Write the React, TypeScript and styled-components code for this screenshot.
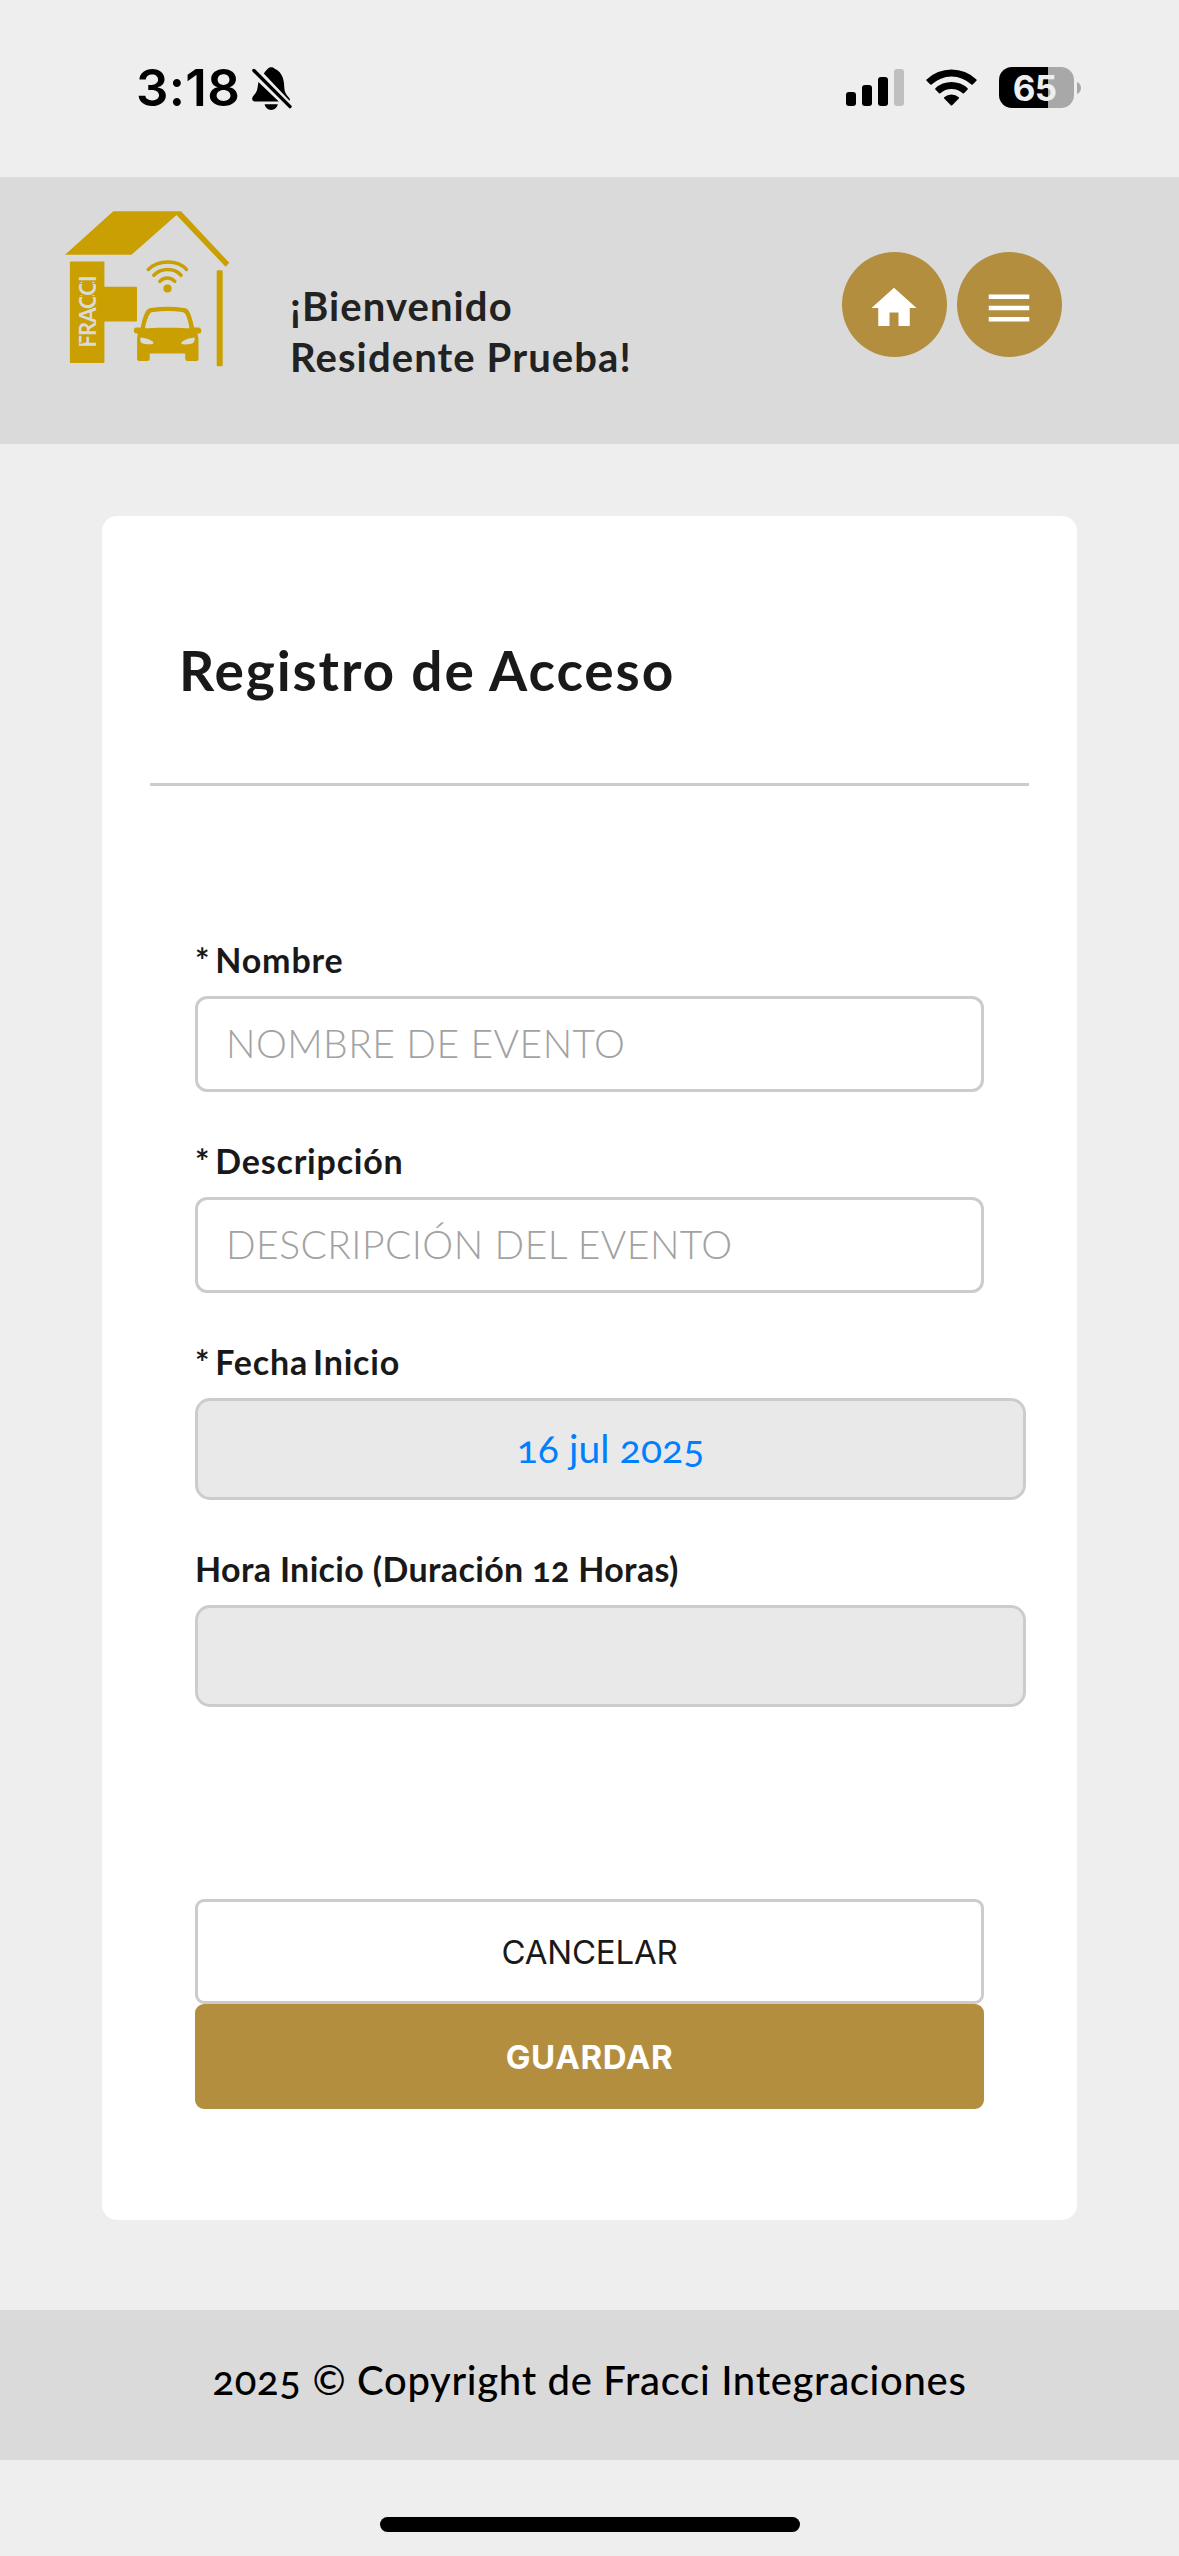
import React from 'react';
import styled, { createGlobalStyle, css } from 'styled-components';

const color = {
  page: '#eeeeee',
  bar: '#dadada',
  gold: '#b38e3f',
  logo: '#c99f02',
  line: '#cccccc',
  ink: '#191919',
  placeholder: '#a2a2a2',
  disabled: '#e9e9e9',
  link: '#0080ff',
};

const GlobalStyle = createGlobalStyle`
  body {
    margin: 0;
    background: ${color.page};
    color: ${color.ink};
    font-family: Lato, sans-serif;
    font-variant-numeric: oldstyle-nums;
  }
  *, *::before, *::after { box-sizing: border-box; }
  svg { display: block; flex: none; }
`;

const Screen = styled.div`
  display: flex;
  flex-direction: column;
  width: 1179px;
  height: 2556px;
  overflow: hidden;
`;

/* ---------- status bar ---------- */

const StatusBar = styled.div`
  display: flex;
  align-items: flex-start;
  height: 177px;
  padding: 67px 97px 0 136px;
  color: #000;
  font-family: Inter, sans-serif;
  font-variant-numeric: normal;
`;

const Clock = styled.span`
  width: 115px;
  height: 41px;
  font-size: 51px;
  font-weight: 600;
  line-height: 42px;
  letter-spacing: 0.3px;
`;

const StatusIcons = styled.div`
  display: flex;
  align-items: flex-start;
  margin-left: auto;
`;

const SignalIcon = styled.svg`
  margin-top: 2px;
`;

const WifiIcon = styled.svg`
  margin: 2px 0 0 22px;
`;

const Battery = styled.div`
  display: flex;
  align-items: center;
  margin-left: 22px;
`;

const BatteryBody = styled.div`
  width: 75px;
  height: 41px;
  padding-right: 4px;
  border-radius: 13px;
  background: linear-gradient(90deg, #000 49px, #a8a8a8 49px);
  color: ${color.page};
  font-size: 35px;
  font-weight: 700;
  line-height: 42px;
  letter-spacing: -0.7px;
  text-align: center;
`;

/* ---------- header ---------- */

const Header = styled.header`
  display: flex;
  align-items: flex-start;
  height: 267px;
  padding: 33px 117px 0 64px;
  background: ${color.bar};
`;

const Welcome = styled.p`
  margin: 71px 0 0 58px;
  color: #222;
  font-size: 40px;
  font-weight: 700;
  line-height: 51px;
  letter-spacing: 1.1px;
  white-space: nowrap;
`;

const Actions = styled.nav`
  display: flex;
  gap: 10px;
  margin: 42px 0 0 auto;
`;

const RoundButton = styled.button`
  display: flex;
  align-items: flex-start;
  justify-content: center;
  width: 105px;
  height: 105px;
  padding: 29px 1px 0 0;
  border: 0;
  border-radius: 50%;
  background: ${color.gold};
  color: #fff;
`;

/* ---------- card ---------- */

const Card = styled.main`
  display: flex;
  flex-direction: column;
  height: 1704px;
  margin: 72px 102px 90px;
  padding-top: 124px;
  border-radius: 15px;
  background: #fff;
`;

const Title = styled.h1`
  margin: 0 0 83px 77px;
  font-size: 55px;
  font-weight: 700;
  line-height: 60px;
  letter-spacing: 1.9px;
`;

const Divider = styled.hr`
  width: 879px;
  height: 3px;
  margin: 0 0 153px 48px;
  border: 0;
  background: ${color.line};
`;

const Form = styled.form`
  display: flex;
  flex-direction: column;
  gap: 48px;
  width: 789px;
  margin-left: 93px;
`;

const Field = styled.div`
  display: flex;
  flex-direction: column;
  gap: 17px;
`;

const Label = styled.label<{ $required?: boolean }>`
  height: 40px;
  font-size: 34px;
  font-weight: 700;
  line-height: 41px;
  letter-spacing: ${p => (p.$required ? 0.8 : 0.35)}px;
  word-spacing: ${p => (p.$required ? -4 : 0)}px;
  white-space: nowrap;
`;

const TextBox = styled.div`
  height: 96px;
  padding-left: 28px;
  border: 3px solid ${color.line};
  border-radius: 12px;
  color: ${color.placeholder};
  font-size: 39px;
  font-weight: 300;
  line-height: 89px;
  letter-spacing: 0.44px;
  white-space: nowrap;
`;

const PickerBox = styled.div`
  width: 831px;
  height: 102px;
  border: 3px solid ${color.line};
  border-radius: 15px;
  background: ${color.disabled};
  color: ${color.link};
  font-size: 39px;
  line-height: 95px;
  letter-spacing: 0.1px;
  text-align: center;
`;

const Buttons = styled.div`
  display: flex;
  flex-direction: column;
  margin-top: 144px;
`;

const Button = styled.button<{ $primary?: boolean }>`
  height: 105px;
  padding: 2px 0 0;
  border: 3px solid ${color.line};
  border-radius: 9px;
  background: #fff;
  color: ${color.ink};
  font-family: Inter, sans-serif;
  font-size: 33px;
  font-weight: 400;
  letter-spacing: -0.2px;
  line-height: 97px;
  ${p => p.$primary && css`
    border-color: ${color.gold};
    background: ${color.gold};
    color: #fff;
    font-weight: 700;
    letter-spacing: 0.6px;
  `}
`;

/* ---------- footer ---------- */

const Footer = styled.footer`
  height: 150px;
  padding-top: 40px;
  background: ${color.bar};
  color: #000;
  font-size: 40px;
  font-weight: 500;
  line-height: 60px;
  letter-spacing: 0.68px;
  text-align: center;
`;

const HomeIndicator = styled.div`
  width: 420px;
  height: 15px;
  margin: 57px auto 0;
  border-radius: 8px;
  background: #000;
`;

const BellOff = () => (
  <svg width="42" height="44" viewBox="0 0 42 44">
    <path d="M12.8 6.6C14 4.6 15.4 3 16.4 2.2 17.4.8 18.8.2 20.2.2s2.9.6 3.8 1.9c4.8 2 8 6.6 8.9 13.5.5 4 .2 7.4 1.5 10.2 1.2 2.4 3 4.2 4.2 5.8.4 1 .3 1.5-.1 2.1z" />
    <path d="M7.4 15 27.8 34.4H4C2 34.4 1 33 1.2 31.3c.3-2 2.4-3.6 3.8-5.8C6.7 22.7 6.6 19.5 7.4 15zM13.6 37.3h13.2c-.6 3.4-3.3 5.6-6.6 5.6s-6-2.2-6.6-5.6z" />
    <path d="M2.9 3.5 39 39.6" stroke="#000" strokeWidth="3.4" strokeLinecap="round" />
  </svg>
);

const Signal = () => (
  <SignalIcon width="58" height="37" viewBox="0 0 58 37">
    <rect y="23" width="10" height="14" rx="3" />
    <rect x="16" y="16" width="10" height="21" rx="3" />
    <rect x="32" y="8" width="10" height="29" rx="3" />
    <rect x="48" width="10" height="37" rx="3" fill="#bfbfbf" />
  </SignalIcon>
);

const Wifi = () => (
  <WifiIcon width="51" height="37" viewBox="0 0 51 37">
    <path d="M.6 10.5a36 36 0 0 1 49.8 0c.4.4.4.9 0 1.3l-3.7 3.7c-.4.4-.9.4-1.3 0a29 29 0 0 0-39.8 0c-.4.4-.9.4-1.3 0L.6 11.8c-.4-.4-.4-.9 0-1.3z" />
    <path d="M9.4 19.3a23.5 23.5 0 0 1 32.2 0c.4.4.4.9 0 1.3L38 24.3c-.4.4-.9.4-1.3 0a16.5 16.5 0 0 0-22.4 0c-.4.4-.9.4-1.3 0l-3.6-3.7c-.4-.4-.4-.9 0-1.3z" />
    <path d="M18.2 28.2a11.5 11.5 0 0 1 14.6 0c.4.4.4.9 0 1.3l-6.6 6.7c-.4.4-1 .4-1.4 0l-6.6-6.7c-.4-.4-.4-.9 0-1.3z" />
  </WifiIcon>
);

const Logo = () => (
  <svg width="168" height="158" viewBox="24 30 168 158" fill={color.logo}>
    <path d="M25 74.7 73.3 31.3H141L189.3 82.8 185.6 86.8 136.5 35 91.5 74.7z" />
    <path d="M30.8 81.5h32.8q.8 0 .8.8v24.4H96q1 0 1 1V140.5q0 1-1 1H64.4V182q0 1-1 1H30.8q-.9 0-.9-1V82.4q0-.9.9-.9z" />
    <rect x="176.700" y="90.300" width="6" height="96" rx="1.300" />
    <g fill="none" stroke={color.logo} strokeWidth="3.5" strokeLinecap="round">
      <path d="M108.3 89.5c10-10 29.5-10 38.2 0" />
      <path d="M113.8 95.3c7.5-7.6 20.4-7.6 27.3 0" />
      <path d="M119.8 101.3c4-4.5 11-4.5 15 0" />
    </g>
    <circle cx="127.5" cy="108.5" r="4.1" />
    <path fillRule="evenodd" d="M100.8 147.5c.8-4.5 2.5-12 5.2-16.3 1.2-2 2.8-3 5-3.3 11-1.5 22-1.5 33 0 2.2.3 4 1.3 5 3.3 2.5 4.5 4.2 11.8 5 16.3h4.5c3.5 0 3.8 6 .8 6h-2c1 2.5 1.2 4.500 1.200 8V179q0 2-2 2h-9q-2 0-2.300-2v-5.500h-35.500v5.500q0 2-2.300 2h-8.300q-2 0-2-2v-17.500c0-3.500.2-5.500.8-8h-1.500c-3.500 0-3.500-6 0-6zM105 148.300c7-.9 37-.9 44.500 0-1-6.300-2.600-12-4.400-14.600-.8-1.200-1.500-1.600-3.100-1.800-9-1.200-19.500-1.200-28.800 0-1.800.2-2.700.7-3.400 1.800-1.900 2.800-3.800 8-4.800 14.600zM100.500 157.500c-.8 3.300.5 5.700 3.200 6.200 3 .6 6 .7 8.700.5 1.300-.2 1.300-1.800.2-2.600-3-2.400-7.500-3.600-12.100-4.100zM154.600 157.500c-4.800.5-9 1.700-12.200 4.100-1.300.9-1.600 2.500-.1 2.700 3 .2 6 .1 9-.6 2.600-.6 3.900-2.900 3.300-6.200z" />
    <text
      transform="translate(56.3 167.5) rotate(-90)"
      fill={color.bar}
      fontFamily="Lato, sans-serif"
      fontSize="22"
      fontWeight="700"
      textLength="72"
      lengthAdjust="spacing"
    >
      FRACCI
    </text>
    <path d="M39.5 163h4M51 160h6M39.5 103.500h19M39.500 116.500h19" fill="none" stroke={color.logo} strokeWidth="1" />
  </svg>
);

const Home = () => (
  <svg width="54" height="54" viewBox="0 0 24 24" fill="currentColor">
    <path d="M10 20v-6h4v6h5v-8h3L12 3 2 12h3v8z" />
  </svg>
);

const Menu = () => (
  <svg width="54" height="54" viewBox="0 0 24 24" fill="currentColor">
    <path d="M3 18h18v-2H3v2zm0-5h18v-2H3v2zm0-7v2h18V6H3z" />
  </svg>
);

export default function App() {
  return (
    <Screen>
      <GlobalStyle />
      <StatusBar>
        <Clock>3:18</Clock>
        <BellOff />
        <StatusIcons>
          <Signal />
          <Wifi />
          <Battery>
            <BatteryBody>65</BatteryBody>
            <svg width="8" height="12" viewBox="0 0 8 12">
              <path d="M3 0c5.3 2 5.3 10 0 12z" fill="#a8a8a8" />
            </svg>
          </Battery>
        </StatusIcons>
      </StatusBar>

      <Header>
        <Logo />
        <Welcome>
          ¡Bienvenido
          <br />
          Residente Prueba!
        </Welcome>
        <Actions>
          <RoundButton type="button" aria-label="Inicio"><Home /></RoundButton>
          <RoundButton type="button" aria-label="Menú"><Menu /></RoundButton>
        </Actions>
      </Header>

      <Card>
        <Title>Registro de Acceso</Title>
        <Divider />
        <Form>
          <Field>
            <Label $required>* Nombre</Label>
            <TextBox>NOMBRE DE EVENTO</TextBox>
          </Field>
          <Field>
            <Label $required>* Descripción</Label>
            <TextBox>DESCRIPCIÓN DEL EVENTO</TextBox>
          </Field>
          <Field>
            <Label $required>* Fecha Inicio</Label>
            <PickerBox>16 jul 2025</PickerBox>
          </Field>
          <Field>
            <Label>Hora Inicio (Duración 12 Horas)</Label>
            <PickerBox />
          </Field>
          <Buttons>
            <Button type="button">CANCELAR</Button>
            <Button type="button" $primary>GUARDAR</Button>
          </Buttons>
        </Form>
      </Card>

      <Footer>2025 © Copyright de Fracci Integraciones</Footer>
      <HomeIndicator />
    </Screen>
  );
}
